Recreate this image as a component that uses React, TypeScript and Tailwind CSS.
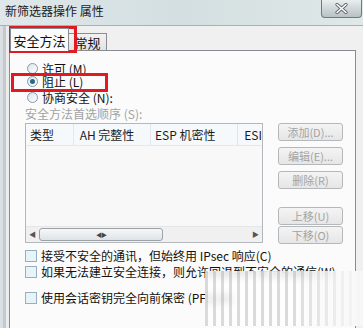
import React from "react";

const font = { fontFamily: '"Noto Sans CJK SC", "Liberation Sans", sans-serif' };

const Radio = ({ label, checked }: { label: string; checked?: boolean }) => (
  <div className="flex items-center gap-[4px] h-[13px]">
    <span className="w-[11px] h-[11px] rounded-full border border-[#8a9aa6] bg-gradient-to-br from-[#d6e6ec] to-[#ffffff] flex items-center justify-center">
      {checked && <span className="w-[5px] h-[5px] rounded-full bg-[#2a6a84]" />}
    </span>
    <span className="text-[12px] leading-none text-[#111]">{label}</span>
  </div>
);

const Check = ({ label }: { label: string }) => (
  <div className="flex items-center gap-[4px] h-[14px] whitespace-nowrap">
    <span className="w-[12px] h-[12px] border border-[#97b0bf] bg-[#e6f3f7] shrink-0" />
    <span className="text-[12px] leading-none text-[#111]">{label}</span>
  </div>
);

const Btn = ({ label }: { label: string }) => (
  <div className="w-[65px] h-[18px] rounded-[3px] border border-[#b5b8ba] bg-gradient-to-b from-[#f4f4f4] to-[#e6e6e6] flex items-center justify-center text-[11px] leading-none text-[#a3a3a3]">
    {label}
  </div>
);

export default function App() {
  return (
    <div className="w-[363px] h-[328px] relative overflow-hidden bg-[#f0f0f0]" style={font}>
      {/* title bar */}
      <div className="h-[26px] flex items-start justify-between bg-gradient-to-r from-[#dfe7ea] via-[#d3dfe1] to-[#e0e8e8] border-b border-[#a9b1b4]">
        <span className="pl-[5px] pt-[5px] text-[12px] leading-none text-[#1a1a1a]">新筛选器操作 属性</span>
        <div className="w-[41px] h-[18px] mr-[1px] rounded-b-[4px] border border-t-0 border-[#6f7a80] bg-gradient-to-b from-[#e9eeef] to-[#b8c1c4] flex items-center justify-center">
          <svg width="13" height="11" viewBox="0 0 13 11">
            <path d="M2 1.5L11 9.5M11 1.5L2 9.5" stroke="#5b6266" strokeWidth="3.2" strokeLinecap="round" />
            <path d="M2 1.5L11 9.5M11 1.5L2 9.5" stroke="#ffffff" strokeWidth="1.6" strokeLinecap="round" />
          </svg>
        </div>
      </div>

      <div className="flex h-[302px]">
        {/* left frame */}
        <div className="w-[9px] flex">
          <div className="w-[3px] bg-[#d9dfe2]" />
          <div className="w-[3px] bg-[#c3c9cc]" />
          <div className="w-[3px] bg-[#ececec]" />
        </div>
        <div className="flex-1 flex flex-col pr-[7px]">
          {/* tabs */}
          <div className="h-[24px] flex items-end pl-[1px]">
            <div className="relative z-10 w-[59px] h-[23px] -mb-px bg-[#fbfbfb] border border-b-0 border-[#898c95] flex items-center justify-center text-[13px] leading-none text-[#111]">
              安全方法
            </div>
            <div className="w-[38px] h-[17px] bg-gradient-to-b from-[#f2f2f2] to-[#e3e3e3] border border-l-0 border-b-0 border-[#898c95] flex items-center justify-center text-[13px] leading-none text-[#111]">
              常规
            </div>
          </div>
          {/* panel */}
          <div className="flex-1 border border-b-0 border-[#898c95] bg-[#fbfbfb] pl-[15px] pt-[11px]">
            <div className="pl-[2px] flex flex-col">
              <Radio label="许可 (M)" />
              <Radio label="阻止 (L)" checked />
              <div className="h-[3px]" />
              <Radio label="协商安全 (N):" />
            </div>
            <div className="mt-[2px] h-[16px] flex items-center text-[12px] leading-none text-[#a2a2a2]">安全方法首选顺序 (S):</div>
            <div className="mt-[1px] flex items-start">
              <div className="w-[238px] h-[120px] border border-[#b4b8bc] bg-[#f8f8f8] flex flex-col">
                <div className="h-[22px] flex bg-[#f6f9fb] border-b border-[#e4e8ec] text-[12px] leading-none text-[#1b1b1b] overflow-hidden whitespace-nowrap">
                  <div className="w-[48px] flex items-center pl-[4px] border-r border-[#e2e8ee]">类型</div>
                  <div className="w-[78px] flex items-center pl-[6px] border-r border-[#e2e8ee]">AH 完整性</div>
                  <div className="w-[88px] flex items-center pl-[4px] border-r border-[#dde4ea]">ESP 机密性</div>
                  <div className="flex-1 flex items-center pl-[6px]">ESI</div>
                </div>
                <div className="flex-1" />
                {/* scrollbar */}
                <div className="h-[16px] flex items-center bg-[#f0f0f0] border-t border-[#e6e6e6] px-[3px]">
                  <span className="text-[7px] text-[#555] w-[10px]">◀</span>
                  <div className="w-[124px] h-[13px] rounded-[3px] border border-[#9ba2a8] bg-gradient-to-b from-[#f6f7f8] to-[#dfe3e6] flex items-center justify-center text-[6px] text-[#444] tracking-[-1px]">
                    ◀▶
                  </div>
                  <div className="flex-1" />
                  <span className="text-[7px] text-[#555]">▶</span>
                </div>
              </div>
              <div className="ml-[15px] flex flex-col">
                <Btn label="添加(D)..." />
                <div className="h-[6px]" />
                <Btn label="编辑(E)..." />
                <div className="h-[6px]" />
                <Btn label="删除(R)" />
                <div className="h-[18px]" />
                <Btn label="上移(U)" />
                <div className="h-[1px]" />
                <Btn label="下移(O)" />
              </div>
            </div>
            <div className="mt-[5px] flex flex-col">
              <Check label="接受不安全的通讯，但始终用 IPsec 响应(C)" />
              <div className="h-[2px]" />
              <Check label="如果无法建立安全连接，则允许回退到不安全的通信(W)" />
              <div className="h-[12px]" />
              <Check label="使用会话密钥完全向前保密 (PFS)(K)" />
            </div>
          </div>
        </div>
      </div>

      {/* red highlight boxes */}
      <div className="absolute left-[9px] top-[26px] w-[68px] h-[27px] border-[3px] border-[#e01a20]" />
      <div className="absolute left-[11px] top-[73px] w-[97px] h-[19px] border-[3px] border-[#e01a20]" />

      {/* blurred watermark */}
      <div className="absolute left-[205px] top-[271px] w-[158px] h-[55px] backdrop-blur-[3px] bg-white/75 bg-[repeating-linear-gradient(90deg,rgba(150,150,150,0.35)_0px,rgba(150,150,150,0.35)_3px,rgba(255,255,255,0)_3px,rgba(255,255,255,0)_8px)]" />
      <div className="absolute left-[290px] top-[271px] w-[73px] h-[55px] bg-gradient-to-r from-white/0 to-[#f7f7f7]" />
    </div>
  );
}
